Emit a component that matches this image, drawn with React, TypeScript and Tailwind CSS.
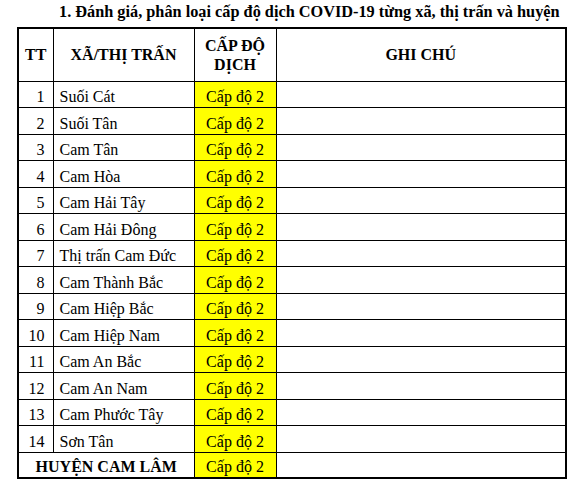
const rows = [
  "Suối Cát",
  "Suối Tân",
  "Cam Tân",
  "Cam Hòa",
  "Cam Hải Tây",
  "Cam Hải Đông",
  "Thị trấn Cam Đức",
  "Cam Thành Bắc",
  "Cam Hiệp Bắc",
  "Cam Hiệp Nam",
  "Cam An Bắc",
  "Cam An Nam",
  "Cam Phước Tây",
  "Sơn Tân",
];

export default function App() {
  return (
    <div className="w-[584px] h-[496px] bg-white text-black font-['Liberation_Serif','Times_New_Roman',serif]">
      {/* Title */}
      <div className="pl-[59px] pt-[2px] mb-[5px] text-[16.3px] leading-[20px] font-bold whitespace-nowrap">
        1. Đánh giá, phân loại cấp độ dịch COVID-19 từng xã, thị trấn và huyện
      </div>

      <div className="pl-[17px]">
        <table className="border-collapse border-2 border-black text-[16px] leading-[18px] table-fixed w-[550px]">
          <colgroup>
            <col className="w-[35px]" />
            <col className="w-[141px]" />
            <col className="w-[82px]" />
            <col />
          </colgroup>
          <thead>
            <tr className="h-[53px] font-bold">
              <th className="border border-black align-middle text-center">TT</th>
              <th className="border border-black align-middle text-center">XÃ/THỊ TRẤN</th>
              <th className="border border-black align-middle text-center leading-[19px]">
                CẤP ĐỘ
                <br />
                DỊCH
              </th>
              <th className="border border-black align-middle text-center">GHI CHÚ</th>
            </tr>
          </thead>
          <tbody>
            {rows.map((name, i) => (
              <tr key={name} className={i % 2 === 0 ? "h-[26px]" : "h-[27px]"}>
                <td className="border border-black align-bottom text-right pr-[8px] pb-[1px]">{i + 1}</td>
                <td className="border border-black align-bottom text-left pl-[6px] pb-[1px] whitespace-nowrap">{name}</td>
                <td className="border border-black align-bottom text-center pb-[1px] bg-[#ffff00] whitespace-nowrap">Cấp độ 2</td>
                <td className="border border-black" />
              </tr>
            ))}
            <tr className="h-[26px]">
              <td colSpan={2} className="border border-black align-bottom text-center font-bold pb-[1px] whitespace-nowrap">
                HUYỆN CAM LÂM
              </td>
              <td className="border border-black align-bottom text-center pb-[1px] bg-[#ffff00] whitespace-nowrap">Cấp độ 2</td>
              <td className="border border-black" />
            </tr>
          </tbody>
        </table>
      </div>
    </div>
  );
}
